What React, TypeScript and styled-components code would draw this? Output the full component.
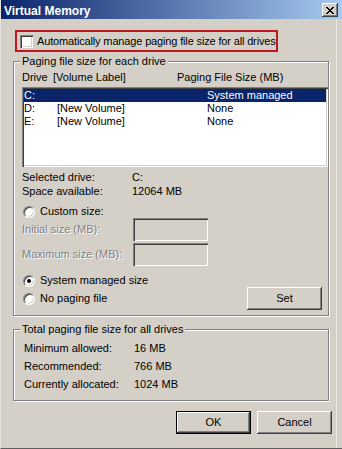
import React from "react";
import styled, { createGlobalStyle, css } from "styled-components";

const GlobalStyle = createGlobalStyle`
  * { box-sizing: border-box; }
  body {
    margin: 0;
    background: #d4d0c8;
  }
`;

const raised = css`
  box-shadow: inset -1px -1px #404040, inset 1px 1px #fff, inset -2px -2px #808080, inset 2px 2px #d4d0c8;
`;

const sunken = css`
  box-shadow: inset 1px 1px #808080, inset 2px 2px #404040, inset -1px -1px #fff, inset -2px -2px #d4d0c8;
`;

const Window = styled.div`
  width: 342px;
  height: 449px;
  background: #d4d0c8;
  border-left: 1px solid #e6e3dc;
  border-bottom: 1px solid #5f5f5f;
  font-family: "Liberation Sans", Arial, sans-serif;
  font-size: 11px;
  line-height: 13px;
  color: #000;
  display: flex;
  flex-direction: column;
  overflow: hidden;
`;

const TitleBar = styled.div`
  height: 19px;
  flex-shrink: 0;
  display: flex;
  align-items: flex-start;
  justify-content: space-between;
  padding: 0 4px 0 3px;
  background: linear-gradient(to right, #0a246a, #a6caf0);
`;

const TitleText = styled.div`
  margin-top: 4px;
  font-weight: bold;
  font-size: 12px;
  line-height: 15px;
  color: #fff;
`;

const CloseButton = styled.div`
  margin-top: 3px;
  width: 16px;
  height: 14px;
  background: #d4d0c8;
  display: flex;
  align-items: center;
  justify-content: center;
  ${raised}
`;

const Body = styled.div`
  flex: 1;
  display: flex;
  flex-direction: column;
  padding: 11px 4px 0 12px;
  margin-right: 5px;
  border-right: 1px solid #ebe8e1;
`;

const AutoBox = styled.label`
  align-self: flex-start;
  margin-left: 2px;
  width: 263px;
  height: 22px;
  border: 2px solid #c0161d;
  display: flex;
  align-items: center;
  gap: 4px;
  padding-left: 3px;
  letter-spacing: -0.15px;
`;

const CheckBox = styled.span`
  width: 13px;
  height: 13px;
  flex-shrink: 0;
  background: #fff;
  ${sunken}
`;

const GroupBox = styled.div<{ $top: number; $bottom: number }>`
  margin: ${({ $top }) => $top}px 3px 0 0;
  padding: 0 0 ${({ $bottom }) => $bottom}px 6px;
  border: 1px solid #808080;
  box-shadow: inset 1px 1px 0 #fff, 1px 1px 0 #fff;
  display: flex;
  flex-direction: column;
`;

const GroupTitle = styled.div`
  align-self: flex-start;
  margin-top: -7px;
  padding: 0 2px;
  background: #d4d0c8;
`;

const GroupBody = styled.div<{ $indent: number }>`
  padding-left: ${({ $indent }) => $indent}px;
  display: flex;
  flex-direction: column;
`;

const Columns = styled.div`
  margin-top: 3px;
  display: grid;
  grid-template-columns: 31px 124px auto;
`;

const DriveList = styled.div`
  margin-top: 3px;
  height: 80px;
  padding: 2px;
  background: #fff;
  ${sunken}
`;

const DriveRow = styled.div<{ $selected?: boolean }>`
  height: 13px;
  display: grid;
  grid-template-columns: 33px 150px auto;
  background: ${({ $selected }) => ($selected ? "#0a246a" : "transparent")};
  color: ${({ $selected }) => ($selected ? "#fff" : "#000")};
`;

const InfoGrid = styled.div<{ $top: number; $gap: number }>`
  margin-top: ${({ $top }) => $top}px;
  display: grid;
  grid-template-columns: 110px auto;
  row-gap: ${({ $gap }) => $gap}px;
`;

const RadioRow = styled.div<{ $top?: number }>`
  margin-top: ${({ $top }) => $top ?? 0}px;
  height: 13px;
  display: flex;
  align-items: center;
  gap: 5px;
  padding-left: 1px;
`;

const Radio = styled.span<{ $checked?: boolean }>`
  width: 12px;
  height: 12px;
  border-radius: 50%;
  background: #fff;
  border: 1px solid;
  border-color: #808080 #fff #fff #808080;
  box-shadow: inset 1px 1px 0 #404040, inset -1px -1px 0 #d4d0c8;
  display: flex;
  align-items: center;
  justify-content: center;

  &::after {
    content: "";
    width: 4px;
    height: 4px;
    border-radius: 50%;
    background: ${({ $checked }) => ($checked ? "#000" : "transparent")};
  }
`;

const FieldRow = styled.div<{ $top?: number }>`
  margin-top: ${({ $top }) => $top ?? 0}px;
  height: 23px;
  display: grid;
  grid-template-columns: 111px 75px;
  align-items: center;
`;

const Disabled = styled.span`
  color: #808080;
  text-shadow: 1px 1px 0 #fff;
`;

const TextBox = styled.div`
  width: 75px;
  height: 23px;
  background: #d4d0c8;
  ${sunken}
`;

const SetRow = styled.div`
  height: 23px;
  display: flex;
  align-items: center;
  justify-content: space-between;
  padding-left: 1px;
  padding-right: 6px;
`;

const RadioLabel = styled.div`
  display: flex;
  align-items: center;
  gap: 5px;
`;

const Button = styled.button<{ $default?: boolean }>`
  width: 75px;
  height: 23px;
  padding: 0;
  font: inherit;
  color: #000;
  background: #d4d0c8;
  border: ${({ $default }) => ($default ? "1px solid #000" : "none")};
  ${raised}
`;

const ButtonRow = styled.div`
  margin-top: 10px;
  display: flex;
  justify-content: flex-end;
  gap: 6px;
`;

const drives = [
  { drive: "C:", label: "", size: "System managed", selected: true },
  { drive: "D:", label: "[New Volume]", size: "None" },
  { drive: "E:", label: "[New Volume]", size: "None" },
];

const totals = [
  ["Minimum allowed:", "16 MB"],
  ["Recommended:", "766 MB"],
  ["Currently allocated:", "1024 MB"],
];

const CloseGlyph = () => (
  <svg width="8" height="7" viewBox="0 0 8 7" shapeRendering="crispEdges">
    <path
      fill="#000"
      d="M0 0h2v1H0zM6 0h2v1H6zM1 1h2v1H1zM5 1h2v1H5zM2 2h4v1H2zM3 3h2v1H3zM2 4h4v1H2zM1 5h2v1H1zM5 5h2v1H5zM0 6h2v1H0zM6 6h2v1H6z"
    />
  </svg>
);

export default function App() {
  return (
    <>
      <GlobalStyle />
      <Window>
        <TitleBar>
          <TitleText>Virtual Memory</TitleText>
          <CloseButton>
            <CloseGlyph />
          </CloseButton>
        </TitleBar>
        <Body>
          <AutoBox>
            <CheckBox />
            Automatically manage paging file size for all drives
          </AutoBox>

          <GroupBox $top={9} $bottom={5}>
            <GroupTitle>Paging file size for each drive</GroupTitle>
            <GroupBody $indent={2}>
              <Columns>
                <span>Drive</span>
                <span>[Volume Label]</span>
                <span>Paging File Size (MB)</span>
              </Columns>
              <DriveList>
                {drives.map((d) => (
                  <DriveRow key={d.drive} $selected={d.selected}>
                    <span>{d.drive}</span>
                    <span>{d.label}</span>
                    <span>{d.size}</span>
                  </DriveRow>
                ))}
              </DriveList>
              <InfoGrid $top={4} $gap={1}>
                <span>Selected drive:</span>
                <span>C:</span>
                <span>Space available:</span>
                <span>12064 MB</span>
              </InfoGrid>
              <RadioRow $top={7}>
                <Radio />
                Custom size:
              </RadioRow>
              <FieldRow>
                <Disabled>Initial size (MB):</Disabled>
                <TextBox />
              </FieldRow>
              <FieldRow $top={2}>
                <Disabled>Maximum size (MB):</Disabled>
                <TextBox />
              </FieldRow>
              <RadioRow $top={8}>
                <Radio $checked />
                System managed size
              </RadioRow>
              <SetRow>
                <RadioLabel>
                  <Radio />
                  No paging file
                </RadioLabel>
                <Button>Set</Button>
              </SetRow>
            </GroupBody>
          </GroupBox>

          <GroupBox $top={13} $bottom={9}>
            <GroupTitle>Total paging file size for all drives</GroupTitle>
            <GroupBody $indent={4}>
              <InfoGrid $top={6} $gap={5}>
                {totals.map(([k, v]) => (
                  <React.Fragment key={k}>
                    <span>{k}</span>
                    <span>{v}</span>
                  </React.Fragment>
                ))}
              </InfoGrid>
            </GroupBody>
          </GroupBox>

          <ButtonRow>
            <Button $default>OK</Button>
            <Button>Cancel</Button>
          </ButtonRow>
        </Body>
      </Window>
    </>
  );
}
